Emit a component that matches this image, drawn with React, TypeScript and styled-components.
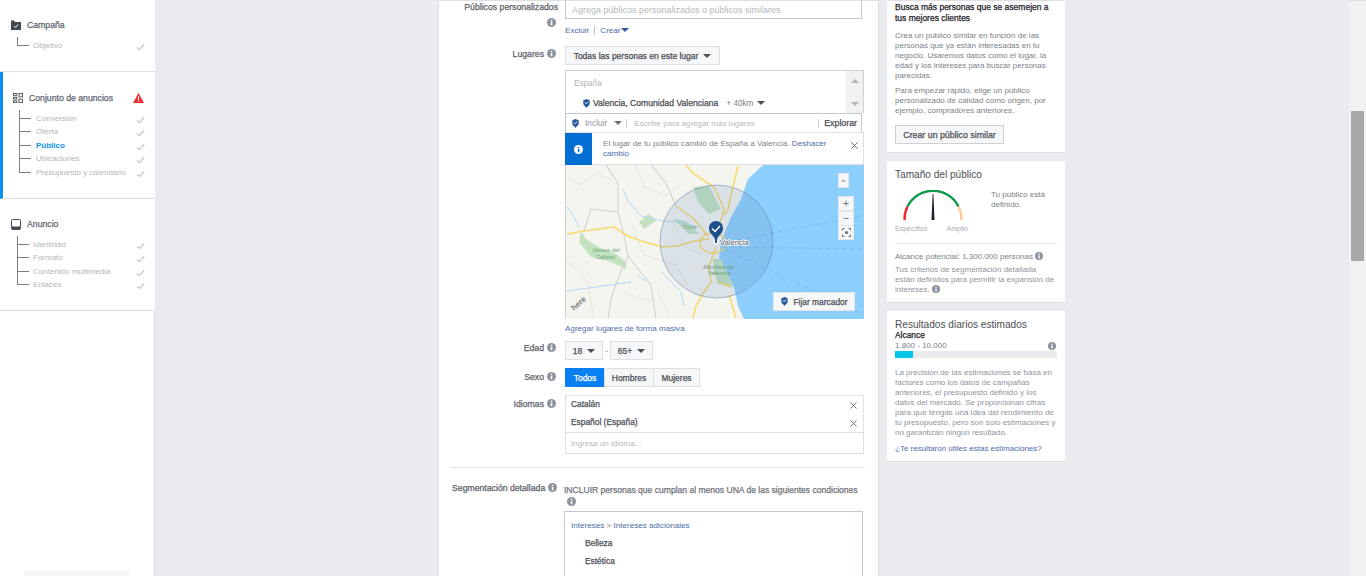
import React from 'react';
import styled, { createGlobalStyle, css } from 'styled-components';

const GlobalStyle = createGlobalStyle`
  html, body {
    margin: 0;
    padding: 0;
    height: 576px;
    overflow: hidden;
    background: #e9ebee;
    font-family: "Liberation Sans", Arial, sans-serif;
    color: #4b4f56;
  }
  * { box-sizing: border-box; }
`;

// the reference's "medium" text: regular widths with a slightly heavier stem
const medium = css`
  font-weight: 400;
  -webkit-text-stroke: 0.25px currentColor;
`;

const Page = styled.div`
  display: flex;
  width: 1366px;
  height: 576px;
  overflow: hidden;
`;

const Glyph = styled.svg`
  display: block;
  flex: none;
`;

const InfoGlyph = styled.svg`
  display: inline-block;
`;

/* ---------- sidebar ---------- */

const Sidebar = styled.aside`
  position: relative;
  width: 155px;
  flex: none;
  background: #fff;
  border-right: 1px solid #dddfe2;
`;

const Branch = styled.span`
  width: 12px;
  height: 13.4px;
  margin-bottom: 5px;
  margin-right: 4px;
  flex: none;
  border-left: 1px solid #7b7f86;
  border-bottom: 1px solid #7b7f86;
`;

const Section = styled.section<{ $height: number; $active?: boolean; $top: number }>`
  height: ${(p) => p.$height}px;
  padding: ${(p) => p.$top}px 10px 0 ${(p) => (p.$active ? 10 : 11)}px;
  border-bottom: 1px solid #dddfe2;
  border-left: ${(p) => (p.$active ? '3px solid #0a8fef' : 'none')};
  margin-right: -1px;
  background: #fff;

  ${(p) =>
    p.$active &&
    css`
      ${Branch} {
        margin-right: 5px;
      }
    `}
`;

const SectionHead = styled.div`
  display: flex;
  align-items: center;
  height: 12px;
  gap: 6px;
  font-size: 8.7px;
  ${medium}
  color: #606770;
`;

const HeadTitle = styled.span`
  flex: 1;
  white-space: nowrap;
`;

const WarningSlot = styled.span`
  margin-right: 1px;
  flex: none;
`;

const Tree = styled.ul`
  list-style: none;
  margin: 6.6px 0 0 6px;
  padding: 0;
`;

const TreeRow = styled.li<{ $selected?: boolean }>`
  display: flex;
  align-items: flex-end;
  height: 13.4px;
  font-size: 8px;
  line-height: 11px;
  color: ${(p) => (p.$selected ? '#0a8fef' : '#b3b6bb')};
  font-weight: ${(p) => (p.$selected ? 700 : 400)};

  &:first-child ${Branch} {
    height: 9px;
  }
`;

const RowLabel = styled.span`
  flex: 1;
  white-space: nowrap;
`;

const RowCheck = styled.svg`
  width: 9px;
  height: 8px;
  flex: none;
`;

const SidebarFoot = styled.div`
  position: absolute;
  left: 24px;
  bottom: 0;
  width: 106px;
  height: 6px;
  background: #f5f6f7;
  border-radius: 2px 2px 0 0;
`;

/* ---------- form panel ---------- */

const Panel = styled.main`
  width: 441px;
  height: 576px;
  margin-left: 283px;
  flex: none;
  background: #fff;
  border-left: 1px solid #dddfe2;
  border-right: 1px solid #dddfe2;
  border-top: 1px solid #dddfe2;
  padding-left: 13px;
  overflow: hidden;
`;

const Field = styled.div<{ $mt: number }>`
  display: grid;
  grid-template-columns: 106px 299px;
  column-gap: 7px;
  margin-top: ${(p) => p.$mt}px;
`;

const FieldLabel = styled.div<{ $top: number }>`
  padding-top: ${(p) => p.$top}px;
  text-align: right;
  font-size: 8.7px;
  ${medium}
  line-height: 12px;
  color: #5d6269;
  white-space: nowrap;
`;

const LabelIcon = styled.span`
  display: inline-block;
  margin-left: 3px;
  margin-right: 2px;
  vertical-align: -1px;
  -webkit-text-stroke: 0;
`;

const IconLine = styled.div`
  margin-top: 5px;
  text-align: right;
  padding-right: 2px;
  line-height: 10px;
`;

const Placeholder = styled.span<{ $small?: boolean }>`
  color: #b5b8be;
  font-size: ${(p) => (p.$small ? 8 : 9)}px;
`;

const AudienceInput = styled.div`
  width: 297px;
  height: 18px;
  border: 1px solid #bdc7d8;
  border-top: none;
  padding: 0 6px;
  display: flex;
  align-items: center;
`;

const InlineLinks = styled.div`
  display: flex;
  align-items: center;
  margin-top: 5px;
  height: 12px;
`;

const TextLink = styled.a`
  color: #4a6ea9;
  font-size: 8.1px;
  text-decoration: none;
`;

const LinkDivider = styled.span`
  width: 1px;
  height: 9px;
  margin: 0 5px;
  background: #bdc7d8;
`;

const Caret = styled.span<{ $color?: string }>`
  display: inline-block;
  width: 0;
  height: 0;
  border-left: 4px solid transparent;
  border-right: 4px solid transparent;
  border-top: 4px solid ${(p) => p.$color || '#4b4f56'};
  flex: none;
`;

const SelectButton = styled.button<{ $width: number }>`
  display: flex;
  align-items: center;
  justify-content: center;
  gap: 5px;
  width: ${(p) => p.$width}px;
  height: 19px;
  padding: 0;
  background: #f6f7f9;
  border: 1px solid #dddfe2;
  font-family: inherit;
  font-size: 8.5px;
  ${medium}
  color: #4b4f56;
  white-space: nowrap;
`;

const LocationBox = styled.div`
  display: flex;
  height: 43px;
  margin-top: 5px;
  border: 1px solid #ced0d4;
  border-bottom: none;
`;

const LocationBody = styled.div`
  flex: 1;
  padding: 7px 8px 0;
`;

const Country = styled.div`
  font-size: 8.2px;
  line-height: 12px;
  color: #b0b3b9;
`;

const Place = styled.div`
  display: flex;
  align-items: center;
  gap: 3px;
  margin: 7px 0 0 9px;
  height: 12px;
  font-size: 8.6px;
  ${medium}
  color: #4b4f56;
  white-space: nowrap;
`;

const Radius = styled.span`
  margin: 0 1px 0 5px;
  font-size: 8.2px;
  font-weight: 400;
  -webkit-text-stroke: 0;
  color: #7b7f86;
`;

const MiniScroll = styled.div`
  width: 17px;
  display: flex;
  flex-direction: column;
  align-items: center;
  justify-content: space-between;
  padding: 8px 0 7px;
  background: #f1f1f1;
`;

const ArrowUp = styled.span`
  border-left: 4px solid transparent;
  border-right: 4px solid transparent;
  border-bottom: 4px solid #b5b5b5;
`;

const ArrowDown = styled.span`
  border-left: 4px solid transparent;
  border-right: 4px solid transparent;
  border-top: 4px solid #b5b5b5;
`;

const SearchRow = styled.div`
  display: flex;
  align-items: center;
  width: 297px;
  height: 19px;
  padding-left: 6px;
  border: 1px solid #bdc7d8;
  border-bottom: none;
  font-size: 8px;
`;

const IncludeLabel = styled.span`
  margin: 0 7px 0 6px;
  font-size: 8.4px;
  color: #8d949e;
`;

const VLine = styled.span`
  width: 1px;
  height: 9px;
  margin: 0 5px 0 4px;
  background: #ced0d4;
`;

const SearchText = styled.span`
  flex: 1;
  padding-left: 2px;
  color: #b5b8be;
  white-space: nowrap;
`;

const Explore = styled.span`
  padding-right: 4px;
  font-size: 8.8px;
  ${medium}
  color: #4b4f56;
`;

const Notice = styled.div`
  display: flex;
  height: 33px;
  border: 1px solid #dddfe2;
  border-left: none;
`;

const NoticeFlag = styled.div`
  display: flex;
  align-items: center;
  justify-content: center;
  width: 27px;
  margin-bottom: -1px;
  background: #006ed3;
  flex: none;
`;

const NoticeText = styled.div`
  flex: 1;
  padding: 6px 14px 0 11px;
  font-size: 8.1px;
  line-height: 10px;
  color: #7b7f86;
`;

const CloseSlot = styled.div`
  width: 12px;
  padding-top: 9px;
  flex: none;
`;

const MapFrame = styled.div`
  position: relative;
  height: 154px;
  overflow: hidden;
  border-left: 1px solid #ced0d4;
`;

const MapControl = styled.div<{ $top: number; $height: number; $width?: number; $right?: number }>`
  position: absolute;
  top: ${(p) => p.$top}px;
  right: ${(p) => p.$right ?? 10}px;
  width: ${(p) => p.$width ?? 16}px;
  height: ${(p) => p.$height}px;
  display: flex;
  align-items: center;
  justify-content: center;
  background: #f6f7f9;
  border: 1px solid #e4e6e9;
  font-size: 11px;
  line-height: 1;
  color: #6d7178;
`;

const PinButton = styled.div`
  position: absolute;
  right: 9px;
  bottom: 8px;
  display: flex;
  align-items: center;
  justify-content: center;
  gap: 6px;
  width: 82px;
  height: 19px;
  background: #f6f7f9;
  border: 1px solid #e4e6e9;
  font-size: 8.4px;
  ${medium}
  color: #4b4f56;
  white-space: nowrap;
`;

const BulkLink = styled.div`
  margin-top: 1px;
  height: 12px;
  line-height: 12px;
`;

const ButtonRow = styled.div`
  display: flex;
  align-items: center;
`;

const AgeDash = styled.span`
  width: 7px;
  text-align: center;
  font-size: 9px;
  color: #90949c;
`;

const GenderButton = styled.button<{ $width: number; $on?: boolean }>`
  width: ${(p) => p.$width}px;
  height: 19px;
  padding: 0;
  margin-left: ${(p) => (p.$on ? 0 : -1)}px;
  border: 1px solid ${(p) => (p.$on ? '#0a7ff0' : '#dddfe2')};
  background: ${(p) => (p.$on ? '#0a7ff0' : '#f6f7f9')};
  color: ${(p) => (p.$on ? '#fff' : '#4b4f56')};
  font-family: inherit;
  font-size: 8.5px;
  ${medium}
`;

const LanguageBox = styled.div`
  height: 59px;
  border: 1px solid #dddfe2;
`;

const LanguageRow = styled.div`
  display: flex;
  align-items: flex-start;
  justify-content: space-between;
  height: 18px;
  padding: 3px 6px 0 5px;
  font-size: 8.4px;
  line-height: 11px;
  ${medium}
  color: #4b4f56;
`;

const RowClose = styled.span`
  margin-top: 3px;
`;

const LanguageInput = styled.div`
  display: flex;
  align-items: center;
  height: 21px;
  padding: 0 5px;
  border-top: 1px solid #dddfe2;
`;

const Divider = styled.hr`
  width: 413px;
  height: 1px;
  margin: 13px 0 0;
  border: none;
  background: #dddfe2;
`;

const Condition = styled.div`
  margin-left: -1px;
  padding-top: 3px;
  font-size: 8.55px;
  ${medium}
  line-height: 12px;
  color: #6f747b;
  white-space: nowrap;
`;

const ConditionIcon = styled.div`
  height: 11px;
  margin: 0 0 0 2px;
  line-height: 10px;
`;

const TargetBox = styled.div`
  width: 299px;
  height: 80px;
  margin: 4px 0 0 -1px;
  padding: 8px 6px;
  border: 1px solid #bdc7d8;
  font-size: 8.1px;
`;

const Crumb = styled.div`
  height: 11px;
  line-height: 11px;
  color: #7b7f86;
`;

const Interest = styled.div`
  margin: 6px 0 0 14px;
  height: 12px;
  line-height: 12px;
  font-size: 8.4px;
  ${medium}
  color: #4b4f56;
`;

/* ---------- right column ---------- */

const SideColumn = styled.div`
  display: flex;
  flex-direction: column;
  gap: 8px;
  width: 178px;
  margin-left: 8px;
  flex: none;
  border-top: 1px solid #dddfe2;
`;

const Card = styled.div<{ $height: number; $top: number }>`
  height: ${(p) => p.$height}px;
  padding: ${(p) => p.$top}px 8px 0;
  background: #fff;
  border-bottom: 1px solid #dddfe2;
`;

const PromoTitle = styled.div`
  font-size: 8.5px;
  ${medium}
  line-height: 10.5px;
  color: #1d2129;
`;

const BodyText = styled.p<{ $mt: number; $color?: string }>`
  margin: ${(p) => p.$mt}px 0 0;
  font-size: 8px;
  line-height: 10px;
  color: ${(p) => p.$color || '#7b7f86'};
`;

const OutlineButton = styled.button`
  display: block;
  width: 109px;
  height: 19px;
  margin-top: 9px;
  padding: 0;
  background: #f6f7f9;
  border: 1px solid #ced0d4;
  font-family: inherit;
  font-size: 8.8px;
  ${medium}
  color: #4b4f56;
`;

const CardTitle = styled.div`
  font-size: 10.1px;
  line-height: 12px;
  color: #4b4f56;
  white-space: nowrap;
`;

const GaugeRow = styled.div`
  display: flex;
  margin-top: 5px;
  height: 48px;
`;

const GaugeSlot = styled.div`
  width: 96px;
  flex: none;
`;

const GaugeArt = styled.svg`
  display: block;
  margin: 4px 0 0 5px;
`;

const GaugeHint = styled.div`
  padding-top: 4px;
  font-size: 8px;
  line-height: 10px;
  color: #7b7f86;
`;

const GaugeScale = styled.div`
  display: flex;
  justify-content: space-between;
  width: 73px;
  margin-top: 2px;
  font-size: 7px;
  line-height: 9px;
  color: #a9acb2;
`;

const ThinRule = styled.div`
  height: 1px;
  margin-top: 9px;
  background: #e9ebee;
`;

const ReachLine = styled.div`
  margin-top: 7px;
  font-size: 8px;
  line-height: 11px;
  color: #7b7f86;
  white-space: nowrap;
`;

const InlineInfo = styled.span`
  display: inline-block;
  margin-left: 2px;
  vertical-align: -1px;
  line-height: 0;
`;

const SmallHead = styled.div`
  margin-top: -1px;
  font-size: 8.4px;
  ${medium}
  line-height: 10px;
  color: #1d2129;
`;

const RangeLine = styled.div`
  display: flex;
  align-items: center;
  justify-content: space-between;
  padding-right: 1px;
  height: 11px;
  font-size: 8px;
  color: #7b7f86;
`;

const Meter = styled.div`
  width: 162px;
  height: 7px;
  background: #e9ebee;
`;

const MeterFill = styled.div`
  height: 100%;
  background: #00c4ea;
`;

const SurveyLink = styled(TextLink)`
  display: block;
  margin-top: 5px;
  font-size: 8px;
  line-height: 11px;
  white-space: nowrap;
`;

/* ---------- page scrollbar ---------- */

const Scrollbar = styled.div`
  width: 17px;
  height: 576px;
  margin-left: auto;
  flex: none;
  padding: 110px 2px 0;
  background: #f1f1f1;
  border-top: 1px solid #dddfe2;
`;

const Thumb = styled.div`
  height: 150px;
  background: #a9a9a9;
`;

/* ---------- small drawings ---------- */

const Info = ({ size = 9 }: { size?: number }) => (
  <InfoGlyph width={size} height={size} viewBox="0 0 10 10">
    <circle cx="5" cy="5" r="5" fill="#8d949e" />
    <rect x="4.2" y="4.3" width="1.7" height="3.8" fill="#fff" />
    <rect x="4.2" y="2" width="1.7" height="1.5" fill="#fff" />
  </InfoGlyph>
);

const Check = () => (
  <RowCheck viewBox="0 0 9 8">
    <path d="M1 4.4 L3.4 6.6 L8.2 1.2" fill="none" stroke="#c9cbcf" strokeWidth="1.4" />
  </RowCheck>
);

const Close = () => (
  <Glyph width="7" height="7" viewBox="0 0 7 7">
    <path d="M0.5 0.5 L6.5 6.5 M6.5 0.5 L0.5 6.5" stroke="#6d7178" strokeWidth="1" />
  </Glyph>
);

const Pin = () => (
  <Glyph width="7" height="9" viewBox="0 0 7 9">
    <path d="M0.3 1.2 L3.5 0 L6.7 1.2 V4.5 C6.7 6.3 4.6 7.3 3.5 9 C2.4 7.3 0.3 6.3 0.3 4.5 Z" fill="#25579a" />
    <path d="M1.9 3.6 L3.1 4.8 L5.2 2.5" fill="none" stroke="#fff" strokeWidth="0.9" />
  </Glyph>
);

const CampaignIcon = () => (
  <Glyph width="10" height="10" viewBox="0 0 10 10">
    <path d="M0 0.5 H3 L4 2 H10 V10 H0 Z" fill="#444950" />
    <path d="M3 6 L4.5 7.4 L7.2 4.4" fill="none" stroke="#fff" strokeWidth="1" />
  </Glyph>
);

const AdSetIcon = () => (
  <Glyph width="10" height="10" viewBox="0 0 10 10">
    <g fill="none" stroke="#4b4f56" strokeWidth="0.9">
      <rect x="0.5" y="0.5" width="3.4" height="1.8" />
      <rect x="0.5" y="4.2" width="3.4" height="1.8" />
      <rect x="0.5" y="7.8" width="3.4" height="1.8" />
      <rect x="6" y="0.5" width="3.5" height="3.4" />
      <rect x="6" y="6.2" width="3.5" height="3.4" />
    </g>
  </Glyph>
);

const AdIcon = () => (
  <Glyph width="10" height="11" viewBox="0 0 10 11">
    <rect x="0.5" y="0.5" width="9" height="10" rx="1" fill="none" stroke="#444950" />
    <rect x="1" y="7.5" width="8" height="3" fill="#444950" />
  </Glyph>
);

const Warning = () => (
  <Glyph width="11" height="10" viewBox="0 0 11 10">
    <path d="M5.5 0 L11 10 H0 Z" fill="#f02c2c" />
    <rect x="4.9" y="3.2" width="1.2" height="3.6" fill="#fff" />
    <rect x="4.9" y="7.6" width="1.2" height="1.2" fill="#fff" />
  </Glyph>
);

const Gauge = () => (
  <GaugeArt width="66" height="32" viewBox="0 0 66 32">
    <g fill="none" strokeWidth="2.4">
      <path d="M4.5 30 A28.5 28.5 0 0 1 7.5 16.5" stroke="#f0282d" />
      <path d="M7.5 16.5 A28.5 28.5 0 0 1 58.5 16.5" stroke="#0a9a48" />
      <path d="M58.5 16.5 A28.5 28.5 0 0 1 61.5 30" stroke="#fbc99b" />
    </g>
    <path d="M32.6 4 L33.4 4 L34.5 30 L31.5 30 Z" fill="#1d2129" />
  </GaugeArt>
);

const mapFont = '"Liberation Sans", Arial, sans-serif';

const ValenciaMap = () => (
  <Glyph width="299" height="154" viewBox="0 0 299 154">
    <rect width="299" height="154" fill="#f5f5f0" />
    <path d="M197 0 L182 14 L175 34 L165 52 L155 76 L153 94 L168 122 L172 141 L178 154 H299 V0 Z" fill="#8ccffc" />
    <g fill="#c3e3c0">
      <path d="M15 66 L13 77 L25 92 L45 97 L60 104 L60 97 L50 89 L32 82 L20 74 Z" />
      <path d="M73 57 L83 49 L90 56 L78 64 Z" />
      <path d="M107 54 L120 56 L133 69 L123 69 Z" />
      <path d="M127 22 L143 21 L155 44 L143 49 L132 37 Z" />
      <path d="M147 94 L155 94 L168 122 L152 119 L148 107 Z" />
    </g>
    <g fill="none" stroke="#dfdfd8" strokeWidth="0.8">
      <path d="M0 10 L14 20 L30 8 L46 16" />
      <path d="M0 95 L12 104 L22 118 L28 154" />
      <path d="M70 0 L78 22 L100 30 L118 18" />
      <path d="M66 60 L78 90 L110 100 L122 120" />
      <path d="M92 128 L104 154" />
      <path d="M58 128 L84 136" />
      <path d="M108 60 L122 84 L136 88" />
    </g>
    <g fill="none" stroke="#d2d2cb" strokeWidth="1.1">
      <path d="M42 154 L45 134 L53 111 L62 91 L58 70 L52 47 L25 44 L18 66" />
      <path d="M40 0 L52 18 L52 47" />
      <path d="M85 0 L100 18 L110 41" />
      <path d="M62 91 L85 120 L90 154" />
    </g>
    <g fill="none" stroke="#a8d4f5" strokeWidth="0.9">
      <path d="M57 24 L62 36 L75 51 L98 56 L118 58 L132 62" />
      <path d="M1 42 L8 52 L13 62" />
      <path d="M1 126 L30 122 L65 117" />
      <path d="M72 111 L80 116" />
      <path d="M95 107 L115 127 L118 141" />
    </g>
    <g fill="none" stroke="#f7d96b" strokeWidth="1.5">
      <path d="M1 69 L18 66 L48 62 L62 71 L78 77 L97 82 L112 81 L128 76 L143 74" />
      <path d="M120 0 L128 9 L148 22 L158 44 L152 66 L150 74" />
      <path d="M172 1 L168 17 L162 44 L158 50" />
      <path d="M110 41 L128 54 L142 71" />
      <path d="M150 82 L143 101 L145 117 L138 127 L130 141 L127 153" />
      <path d="M152 117 L165 122" />
      <path d="M163 130 L170 153" />
      <path d="M134 78 A13 10 0 0 1 160 78 A13 10 0 0 1 134 78" />
    </g>
    <g fill="none" stroke="#6fb2ec" strokeWidth="0.7" strokeDasharray="5 3">
      <path d="M156 78 L299 50" />
      <path d="M156 82 L299 84" />
      <path d="M158 84 L299 150" />
    </g>
    <circle cx="150.5" cy="76.5" r="56.5" fill="#6f8fc2" fillOpacity="0.2" stroke="#5d7fae" strokeOpacity="0.5" />
    <g fontFamily={mapFont}>
      <text x="117" y="64" fontSize="6" fill="#6aa073">Túria</text>
      <text x="27" y="87" fontSize="6" fill="#6aa073">Hoces del</text>
      <text x="30" y="94" fontSize="6" fill="#6aa073">Cabriel</text>
      <text x="137" y="104" fontSize="6" fill="#6aa073">Albufera de</text>
      <text x="142" y="110" fontSize="6" fill="#6aa073">Valencia</text>
      <text x="154" y="80" fontSize="7.6" fill="#4b5563" stroke="#fff" strokeWidth="1.4" paintOrder="stroke">Valencia</text>
      <text x="8" y="146" fontSize="8" fontWeight="700" fill="#7a7a7a" transform="rotate(-42 8 146)">here</text>
    </g>
    <circle cx="150" cy="77" r="2.4" fill="#fff" />
    <path d="M150 56 C145 56 143 60 143 63.5 C143 68 147 70 149 74 L149 78 L151 78 L151 74 C153 70 157 68 157 63.5 C157 60 155 56 150 56 Z" fill="#1d4f8c" />
    <path d="M146 63.5 L149 66.5 L154 61" fill="none" stroke="#fff" strokeWidth="1.5" />
  </Glyph>
);

const STEPS_ADSET = ['Conversión', 'Oferta', 'Público', 'Ubicaciones', 'Presupuesto y calendario'];
const STEPS_AD = ['Identidad', 'Formato', 'Contenido multimedia', 'Enlaces'];

const App = () => {
  return (
    <>
      <GlobalStyle />
      <Page>
        <Sidebar>
          <Section $height={72} $top={19}>
            <SectionHead>
              <CampaignIcon />
              <HeadTitle>Campaña</HeadTitle>
            </SectionHead>
            <Tree>
              <TreeRow>
                <Branch />
                <RowLabel>Objetivo</RowLabel>
                <Check />
              </TreeRow>
            </Tree>
          </Section>
          <Section $height={127} $active $top={20}>
            <SectionHead>
              <AdSetIcon />
              <HeadTitle>Conjunto de anuncios</HeadTitle>
              <WarningSlot>
                <Warning />
              </WarningSlot>
            </SectionHead>
            <Tree>
              {STEPS_ADSET.map((step) => (
                <TreeRow key={step} $selected={step === 'Público'}>
                  <Branch />
                  <RowLabel>{step}</RowLabel>
                  <Check />
                </TreeRow>
              ))}
            </Tree>
          </Section>
          <Section $height={112} $top={19}>
            <SectionHead>
              <AdIcon />
              <HeadTitle>Anuncio</HeadTitle>
            </SectionHead>
            <Tree>
              {STEPS_AD.map((step) => (
                <TreeRow key={step}>
                  <Branch />
                  <RowLabel>{step}</RowLabel>
                  <Check />
                </TreeRow>
              ))}
            </Tree>
          </Section>
          <SidebarFoot />
        </Sidebar>

        <Panel>
          <Field $mt={0}>
            <FieldLabel $top={0}>
              Públicos personalizados
              <IconLine>
                <Info />
              </IconLine>
            </FieldLabel>
            <div>
              <AudienceInput>
                <Placeholder>Agrega públicos personalizados o públicos similares</Placeholder>
              </AudienceInput>
              <InlineLinks>
                <TextLink>Excluir</TextLink>
                <LinkDivider />
                <TextLink>Crear</TextLink>
                <Caret $color="#365899" />
              </InlineLinks>
            </div>
          </Field>

          <Field $mt={10}>
            <FieldLabel $top={2}>
              Lugares
              <LabelIcon>
                <Info />
              </LabelIcon>
            </FieldLabel>
            <div>
              <SelectButton $width={155}>
                Todas las personas en este lugar <Caret />
              </SelectButton>
              <LocationBox>
                <LocationBody>
                  <Country>España</Country>
                  <Place>
                    <Pin />
                    Valencia, Comunidad Valenciana
                    <Radius>+ 40km</Radius>
                    <Caret />
                  </Place>
                </LocationBody>
                <MiniScroll>
                  <ArrowUp />
                  <ArrowDown />
                </MiniScroll>
              </LocationBox>
              <SearchRow>
                <Pin />
                <IncludeLabel>Incluir</IncludeLabel>
                <Caret $color="#6d7178" />
                <VLine />
                <SearchText>Escribe para agregar más lugares</SearchText>
                <VLine />
                <Explore>Explorar</Explore>
              </SearchRow>
              <Notice>
                <NoticeFlag>
                  <svg width="9" height="9" viewBox="0 0 10 10">
                    <circle cx="5" cy="5" r="5" fill="#fff" />
                    <rect x="4.2" y="4.3" width="1.7" height="3.8" fill="#006ed3" />
                    <rect x="4.2" y="2" width="1.7" height="1.5" fill="#006ed3" />
                  </svg>
                </NoticeFlag>
                <NoticeText>
                  El lugar de tu público cambió de España a Valencia. <TextLink>Deshacer</TextLink>{' '}
                  <TextLink>cambio</TextLink>
                </NoticeText>
                <CloseSlot>
                  <Close />
                </CloseSlot>
              </Notice>
              <MapFrame>
                <ValenciaMap />
                <MapControl $top={8} $height={15} $width={11} $right={15}>
                  <svg width="5" height="3" viewBox="0 0 5 3">
                    <path d="M2.5 0 L5 3 H0 Z" fill="#b5b8be" />
                  </svg>
                </MapControl>
                <MapControl $top={31} $height={15}>+</MapControl>
                <MapControl $top={46} $height={15}>−</MapControl>
                <MapControl $top={60} $height={15}>
                  <svg width="9" height="9" viewBox="0 0 9 9">
                    <path d="M0.5 2.5 V0.5 H2.5 M6.5 0.5 H8.5 V2.5 M8.5 6.5 V8.5 H6.5 M2.5 8.5 H0.5 V6.5" fill="none" stroke="#6d7178" />
                    <circle cx="4.5" cy="4.5" r="1.6" fill="#6d7178" />
                  </svg>
                </MapControl>
                <PinButton>
                  <Pin />
                  Fijar marcador
                </PinButton>
              </MapFrame>
              <BulkLink>
                <TextLink>Agregar lugares de forma masiva</TextLink>
              </BulkLink>
            </div>
          </Field>

          <Field $mt={9}>
            <FieldLabel $top={1}>
              Edad
              <LabelIcon>
                <Info />
              </LabelIcon>
            </FieldLabel>
            <ButtonRow>
              <SelectButton $width={38}>
                18 <Caret />
              </SelectButton>
              <AgeDash>-</AgeDash>
              <SelectButton $width={43}>
                65+ <Caret />
              </SelectButton>
            </ButtonRow>
          </Field>

          <Field $mt={8}>
            <FieldLabel $top={3}>
              Sexo
              <LabelIcon>
                <Info />
              </LabelIcon>
            </FieldLabel>
            <ButtonRow>
              <GenderButton $width={40} $on>
                Todos
              </GenderButton>
              <GenderButton $width={50}>Hombres</GenderButton>
              <GenderButton $width={47}>Mujeres</GenderButton>
            </ButtonRow>
          </Field>

          <Field $mt={8}>
            <FieldLabel $top={3}>
              Idiomas
              <LabelIcon>
                <Info />
              </LabelIcon>
            </FieldLabel>
            <LanguageBox>
              <LanguageRow>
                Catalán
                <RowClose>
                  <Close />
                </RowClose>
              </LanguageRow>
              <LanguageRow>
                Español (España)
                <RowClose>
                  <Close />
                </RowClose>
              </LanguageRow>
              <LanguageInput>
                <Placeholder $small>Ingresa un idioma...</Placeholder>
              </LanguageInput>
            </LanguageBox>
          </Field>

          <Divider />

          <Field $mt={13}>
            <FieldLabel $top={1}>
              Segmentación detallada
              <LabelIcon>
                <Info />
              </LabelIcon>
            </FieldLabel>
            <div>
              <Condition>INCLUIR personas que cumplan al menos UNA de las siguientes condiciones</Condition>
              <ConditionIcon>
                <Info />
              </ConditionIcon>
              <TargetBox>
                <Crumb>
                  <TextLink>Intereses</TextLink> &gt; <TextLink>Intereses adicionales</TextLink>
                </Crumb>
                <Interest>Belleza</Interest>
                <Interest>Estética</Interest>
              </TargetBox>
            </div>
          </Field>
        </Panel>

        <SideColumn>
          <Card $height={152} $top={1}>
            <PromoTitle>Busca más personas que se asemejen a tus mejores clientes</PromoTitle>
            <BodyText $mt={8}>
              Crea un público similar en función de las personas que ya están interesadas en tu negocio. Usaremos datos
              como el lugar, la edad y los intereses para buscar personas parecidas.
            </BodyText>
            <BodyText $mt={5}>
              Para empezar rápido, elige un público personalizado de calidad como origen, por ejemplo, compradores
              anteriores.
            </BodyText>
            <OutlineButton>Crear un público similar</OutlineButton>
          </Card>
          <Card $height={142} $top={8}>
            <CardTitle>Tamaño del público</CardTitle>
            <GaugeRow>
              <GaugeSlot>
                <Gauge />
                <GaugeScale>
                  <span>Específico</span>
                  <span>Amplio</span>
                </GaugeScale>
              </GaugeSlot>
              <GaugeHint>Tu público está definido.</GaugeHint>
            </GaugeRow>
            <ThinRule />
            <ReachLine>
              Alcance potencial: 1.300.000 personas
              <InlineInfo>
                <Info size={8} />
              </InlineInfo>
            </ReachLine>
            <BodyText $mt={3} $color="#90949c">
              Tus criterios de segmentación detallada están definidos para permitir la expansión de intereses.
              <InlineInfo>
                <Info size={8} />
              </InlineInfo>
            </BodyText>
          </Card>
          <Card $height={151} $top={8}>
            <CardTitle>Resultados diarios estimados</CardTitle>
            <SmallHead>Alcance</SmallHead>
            <RangeLine>
              1.800 - 10.000
              <Info size={8} />
            </RangeLine>
            <Meter>
              <MeterFill style={{ width: '11%' }} />
            </Meter>
            <BodyText $mt={10} $color="#90949c">
              La precisión de las estimaciones se basa en factores como los datos de campañas anteriores, el
              presupuesto definido y los datos del mercado. Se proporcionan cifras para que tengas una idea del
              rendimiento de tu presupuesto, pero son solo estimaciones y no garantizan ningún resultado.
            </BodyText>
            <SurveyLink>¿Te resultaron útiles estas estimaciones?</SurveyLink>
          </Card>
        </SideColumn>

        <Scrollbar>
          <Thumb />
        </Scrollbar>
      </Page>
    </>
  );
};

export default App;
